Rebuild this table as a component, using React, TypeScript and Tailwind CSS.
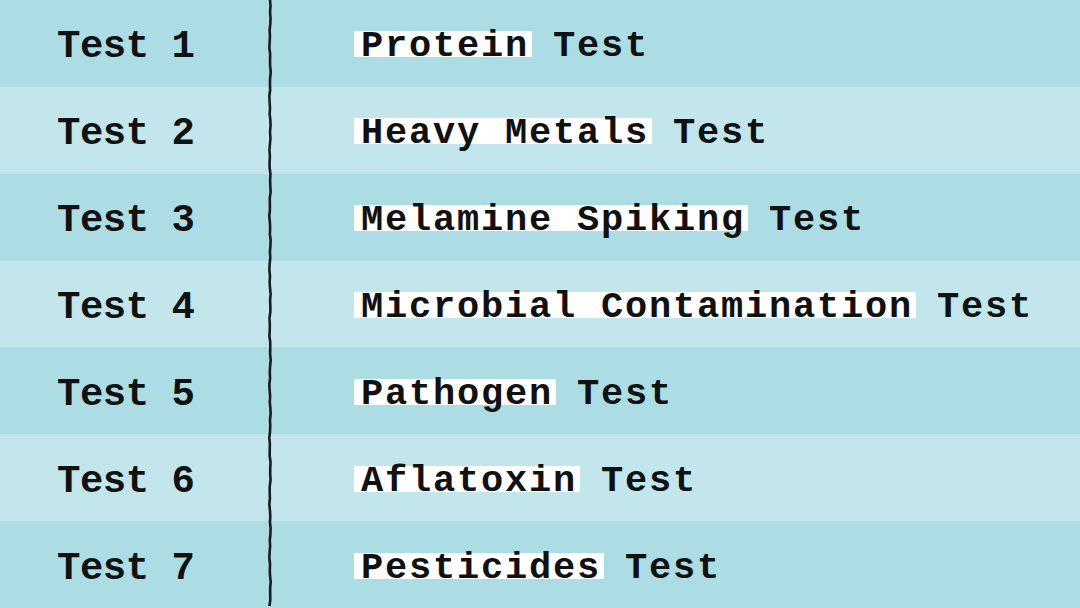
import React from "react";

const rows = [
  { label: "Test 1", hl: "Protein", rest: "Test" },
  { label: "Test 2", hl: "Heavy Metals", rest: "Test" },
  { label: "Test 3", hl: "Melamine Spiking", rest: "Test" },
  { label: "Test 4", hl: "Microbial Contamination", rest: "Test" },
  { label: "Test 5", hl: "Pathogen", rest: "Test" },
  { label: "Test 6", hl: "Aflatoxin", rest: "Test" },
  { label: "Test 7", hl: "Pesticides", rest: "Test" },
];

function Divider() {
  const pts: string[] = [];
  const x = 270;
  for (let y = 0; y <= 608; y += 6) {
    const dx = Math.sin(y * 0.37) * 0.35 + Math.sin(y * 0.11) * 0.4;
    pts.push(`${(x + dx).toFixed(2)},${y}`);
  }
  return (
    <svg
      className="absolute top-0 left-0 pointer-events-none"
      width="1080"
      height="608"
      viewBox="0 0 1080 608"
    >
      <polyline
        points={pts.join(" ")}
        fill="none"
        stroke="#1b1b1b"
        strokeWidth="2.6"
        strokeLinejoin="round"
      />
    </svg>
  );
}

export default function App() {
  return (
    <div
      className="relative w-[1080px] h-[608px] overflow-hidden flex flex-col text-[#111]"
      style={{ fontFamily: '"Liberation Mono", "DejaVu Sans Mono", monospace' }}
    >
      {rows.map((r, i) => (
        <div
          key={r.label}
          className={`flex-1 flex items-center ${i % 2 === 0 ? "bg-[#acdde5]" : "bg-[#c2e6ec]"}`}
        >
          <div className="w-[270px] mt-[9px] pl-[57px] font-bold text-[39px] tracking-[-0.5px] leading-none whitespace-nowrap">
            {r.label}
          </div>
          <div className="pl-[91px] mt-[7px] font-bold text-[37px] tracking-[1.8px] leading-none whitespace-nowrap">
            <span className="inline-block bg-white h-[26px] leading-[30px] pl-[7px] pr-[3px] -ml-[7px] -mr-[3px]">
              {r.hl}
            </span>{" "}
            {r.rest}
          </div>
        </div>
      ))}
      <Divider />
    </div>
  );
}
